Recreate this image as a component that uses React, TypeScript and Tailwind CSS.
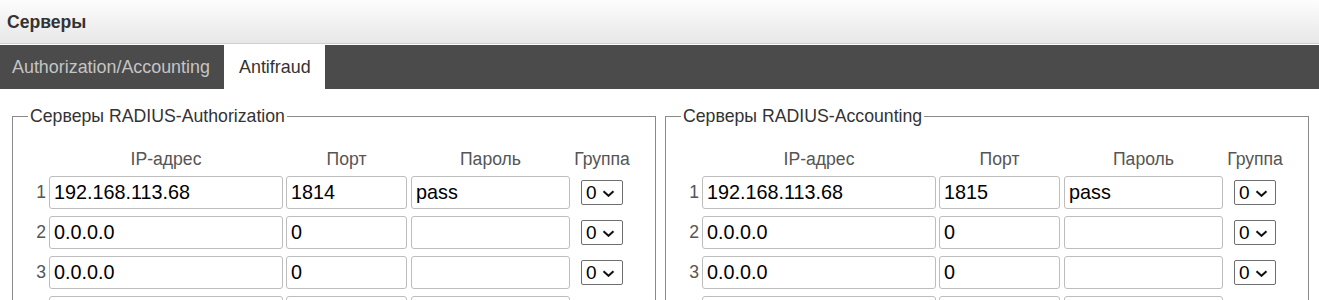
import React from "react";

interface ServerRow {
  ip: string;
  port: string;
  pass: string;
  group: string;
}

const authRows: ServerRow[] = [
  { ip: "192.168.113.68", port: "1814", pass: "pass", group: "0" },
  { ip: "0.0.0.0", port: "0", pass: "", group: "0" },
  { ip: "0.0.0.0", port: "0", pass: "", group: "0" },
  { ip: "0.0.0.0", port: "0", pass: "", group: "0" },
  { ip: "0.0.0.0", port: "0", pass: "", group: "0" },
];

const acctRows: ServerRow[] = [
  { ip: "192.168.113.68", port: "1815", pass: "pass", group: "0" },
  { ip: "0.0.0.0", port: "0", pass: "", group: "0" },
  { ip: "0.0.0.0", port: "0", pass: "", group: "0" },
  { ip: "0.0.0.0", port: "0", pass: "", group: "0" },
  { ip: "0.0.0.0", port: "0", pass: "", group: "0" },
];

const inputCls =
  "h-[33px] border border-[#bdbdbd] rounded-[3px] bg-white pl-[4px] text-[19.8px] text-black outline-none";

const GroupSelect: React.FC<{ value: string }> = ({ value }) => (
  <div className="ml-[11px] flex h-[25px] w-[42px] items-center justify-between rounded-[2px] border border-[#6e6e6e] bg-white pl-[4px] pr-[7px] text-[19px] leading-none text-black">
    <span>{value}</span>
    <svg width="13" height="7" viewBox="0 0 13 7" className="mt-[1px]">
      <path d="M1.5 1.2 L6.5 5.8 L11.5 1.2" fill="none" stroke="#111" strokeWidth="2" />
    </svg>
  </div>
);

const ServerBox: React.FC<{ title: string; rows: ServerRow[] }> = ({ title, rows }) => (
  <fieldset className="w-[644px] border border-[#8a8a8a] pt-[19px]">
    <legend className="ml-[15px] px-[2px] text-[17.7px] leading-[24px] text-[#333]">{title}</legend>
    <div className="flex text-[17.6px] leading-[24px] text-[#555]">
      <div className="w-[33px]" />
      <div className="ml-[3px] w-[234px] text-center">IP-адрес</div>
      <div className="ml-[3px] w-[121px] text-center">Порт</div>
      <div className="ml-[4px] w-[159px] text-center">Пароль</div>
      <div className="ml-[11px] flex w-[42px] justify-center whitespace-nowrap">Группа</div>
    </div>
    <div className="mt-[5px] flex flex-col gap-[7px] pb-[12px]">
      {rows.map((r, i) => (
        <div key={i} className="flex items-center">
          <div className="w-[33px] text-right text-[17.6px] text-[#555]">{i + 1}</div>
          <input className={`${inputCls} ml-[3px] w-[234px]`} defaultValue={r.ip} />
          <input className={`${inputCls} ml-[3px] w-[121px]`} defaultValue={r.port} />
          <input className={`${inputCls} ml-[4px] w-[159px]`} defaultValue={r.pass} />
          <GroupSelect value={r.group} />
        </div>
      ))}
    </div>
  </fieldset>
);

export default function App() {
  return (
    <div className="min-h-screen bg-white font-['Liberation_Sans',Arial,sans-serif]">
      <div className="h-[44px] border-b border-[#cfcfcf] bg-linear-to-b from-[#fdfdfd] to-[#e7e7e7] pl-[7px] pt-[9px] text-[17.6px] font-bold text-[#333]">
        Серверы
      </div>
      <div className="mt-[1px] flex h-[44px] bg-[#4b4b4b] text-[17.9px]">
        <div className="flex w-[224px] items-center pl-[12px] text-[#c4c4c4]">Authorization/Accounting</div>
        <div className="flex w-[101px] items-center bg-white pl-[15px] text-[#333]">Antifraud</div>
      </div>
      <div className="flex gap-[9px] pl-[12px] pt-[15px]">
        <ServerBox title="Серверы RADIUS-Authorization" rows={authRows} />
        <ServerBox title="Серверы RADIUS-Accounting" rows={acctRows} />
      </div>
    </div>
  );
}
